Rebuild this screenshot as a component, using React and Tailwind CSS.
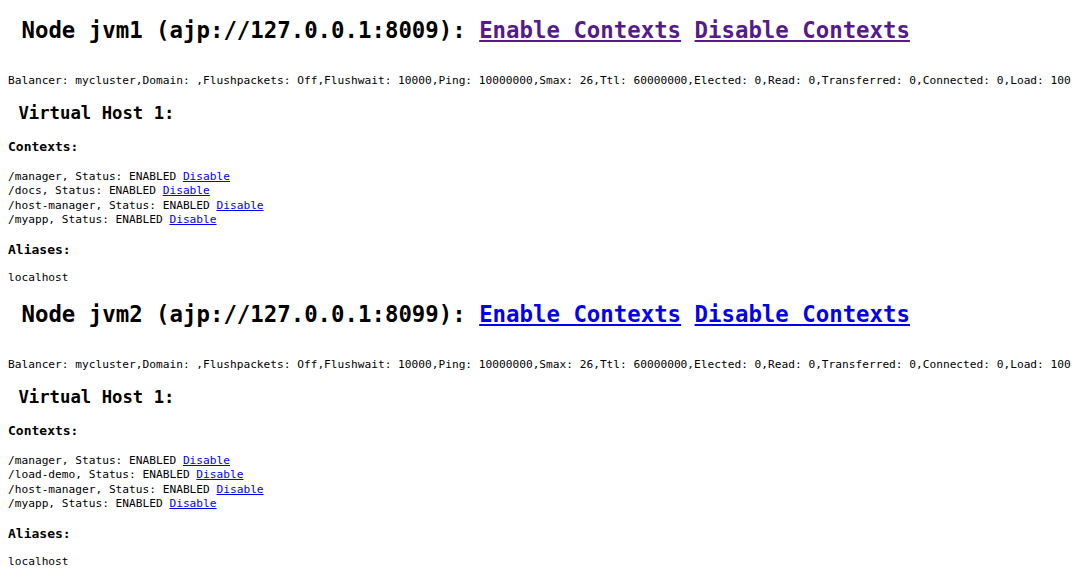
import React from "react";

const nodes = [
  {
    name: "jvm1",
    port: "8009",
    linkColor: "text-[#551a8b]",
    contexts: ["/manager", "/docs", "/host-manager", "/myapp"],
  },
  {
    name: "jvm2",
    port: "8099",
    linkColor: "text-[#0000ee]",
    contexts: ["/manager", "/load-demo", "/host-manager", "/myapp"],
  },
];

const balancer =
  "Balancer: mycluster,Domain: ,Flushpackets: Off,Flushwait: 10000,Ping: 10000000,Smax: 26,Ttl: 60000000,Elected: 0,Read: 0,Transferred: 0,Connected: 0,Load: 100";

function Node({ node }) {
  return (
    <section>
      <h1 className="pt-[17px] text-[22.36px] leading-[26px] font-bold whitespace-pre">
        {` Node ${node.name} (ajp://127.0.0.1:${node.port}): `}
        <a href="#" className={`underline ${node.linkColor}`}>
          Enable Contexts
        </a>{" "}
        <a href="#" className={`underline ${node.linkColor}`}>
          Disable Contexts
        </a>
      </h1>
      <p className="mt-[31px] text-[11.18px] leading-[14px] whitespace-nowrap">{balancer}</p>
      <h2 className="mt-[15px] text-[17.3px] leading-[20px] font-bold whitespace-pre">{" Virtual Host 1:"}</h2>
      <h3 className="mt-[16px] text-[13px] leading-[16px] font-bold">Contexts:</h3>
      <div className="mt-[14.5px] text-[11.18px] leading-[14.5px]">
        {node.contexts.map((c) => (
          <div key={c} className="whitespace-pre">
            {`${c}, Status: ENABLED `}
            <a href="#" className="underline text-[#0000ee]">
              Disable
            </a>
          </div>
        ))}
      </div>
      <h3 className="mt-[14px] text-[13px] leading-[16px] font-bold">Aliases:</h3>
      <p className="mt-[13px] text-[11.18px] leading-[13.5px]">localhost</p>
    </section>
  );
}

export default function App() {
  return (
    <div className="min-h-[573px] bg-white px-2 text-black font-['DejaVu_Sans_Mono',monospace]">
      {nodes.map((n) => (
        <Node key={n.name} node={n} />
      ))}
    </div>
  );
}
